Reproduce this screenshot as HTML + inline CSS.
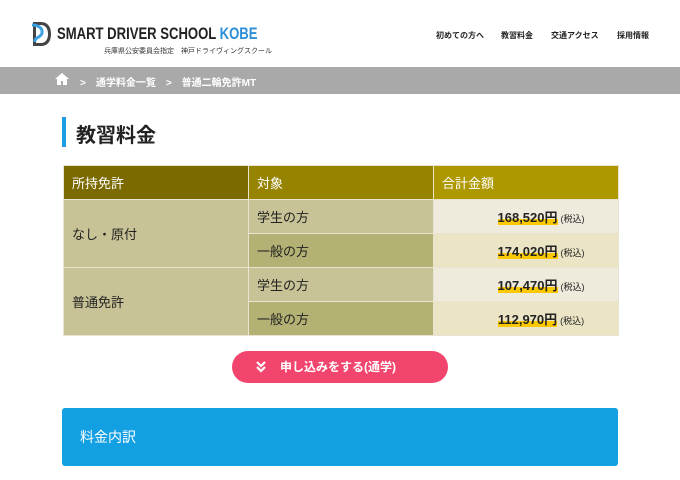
<!DOCTYPE html>
<html><head><meta charset="utf-8"><style>
*{margin:0;padding:0;box-sizing:border-box}
body{width:680px;height:480px;overflow:hidden;background:#fff;font-family:"Liberation Sans","Noto Sans CJK JP",sans-serif;color:#222;position:relative}
.abs{position:absolute}
.nav a{position:absolute;top:30px;font-size:8px;font-weight:bold;color:#222}
.bc{left:0;top:67px;width:680px;height:27px;background:#a9a9a9;color:#fff;font-size:10px;font-weight:bold}
table{position:absolute;left:63px;top:165px;width:555px;border-collapse:collapse;table-layout:fixed}
td{height:34px;border:1px solid #e8e4d0;font-size:13px;padding-left:8px;color:#222}
th{height:34px;border:1px solid #e8e4d0;color:#fff;font-weight:normal;text-align:left;padding-left:8px;font-size:13px}
.p{text-align:center;padding-left:30px}
.p b{font-weight:bold;font-size:13px;background:linear-gradient(transparent 60%,#fcc800 60%)}
.p small{font-size:9px;margin-left:3px}
</style></head><body>
<svg class="abs" style="left:30px;top:21px" width="22" height="26" viewBox="0 0 22 26"><path d="M3 1h8c6 0 10 4 10 12s-4 12-10 12H3z" fill="#444"/><path d="M6 4h5c4 0 7 3 7 9s-3 9-7 9H6z" fill="#fff"/><path d="M2 4c6 0 11 3 10 8s-8 4-7 9" stroke="#3aa0e0" stroke-width="3" fill="none"/></svg>
<div class="abs" style="left:57px;top:24px;font-size:17px;font-weight:bold;white-space:nowrap;color:#222;transform:scaleX(0.77);transform-origin:left">SMART DRIVER SCHOOL <span style="color:#2a8fd8">KOBE</span></div>
<div class="abs" style="left:104px;top:46px;font-size:7px;color:#333">兵庫県公安委員会指定　神戸ドライヴィングスクール</div>
<div class="nav"><a style="left:436px">初めての方へ</a><a style="left:501px">教習料金</a><a style="left:551px">交通アクセス</a><a style="left:617px">採用情報</a></div>
<div class="abs bc"><svg class="abs" style="left:55px;top:6px" width="14" height="12" viewBox="0 0 14 12"><path d="M7 0L0 6h2v6h4V8h2v4h4V6h2z" fill="#fff"/></svg><span class="abs" style="left:80px;top:7px">&gt;　通学料金一覧　&gt;　普通二輪免許MT</span></div>
<div class="abs" style="left:62px;top:117px;width:4px;height:30px;background:#1e9ee0"></div>
<div class="abs" style="left:76px;top:119px;font-size:20px;font-weight:bold">教習料金</div>
<table>
<colgroup><col style="width:185px"><col style="width:185px"><col style="width:185px"></colgroup>
<tr><th style="background:#7a6a00">所持免許</th><th style="background:#968400">対象</th><th style="background:#ae9800">合計金額</th></tr>
<tr><td rowspan="2" style="background:#c8c396">なし・原付</td><td style="background:#c8c396">学生の方</td><td class="p" style="background:#eeeadc"><b>168,520円</b><small>(税込)</small></td></tr>
<tr><td style="background:#b3b274">一般の方</td><td class="p" style="background:#ebe5c6"><b>174,020円</b><small>(税込)</small></td></tr>
<tr><td rowspan="2" style="background:#c8c396">普通免許</td><td style="background:#c8c396">学生の方</td><td class="p" style="background:#eeeadc"><b>107,470円</b><small>(税込)</small></td></tr>
<tr><td style="background:#b3b274">一般の方</td><td class="p" style="background:#ebe5c6"><b>112,970円</b><small>(税込)</small></td></tr>
</table>
<div class="abs" style="left:232px;top:351px;width:216px;height:32px;border-radius:16px;background:#f2456e;color:#fff;font-size:12px;font-weight:bold;line-height:32px;padding-left:48px"><svg class="abs" style="left:24px;top:10px" width="10" height="12" viewBox="0 0 10 12"><path d="M1 1l4 4 4-4M1 6l4 4 4-4" stroke="#fff" stroke-width="2.2" fill="none"/></svg>申し込みをする(通学)</div>
<div class="abs" style="left:62px;top:408px;width:556px;height:58px;border-radius:3px;background:#13a0e3;color:#fff;font-size:14px;line-height:58px;padding-left:18px">料金内訳</div>
</body></html>
